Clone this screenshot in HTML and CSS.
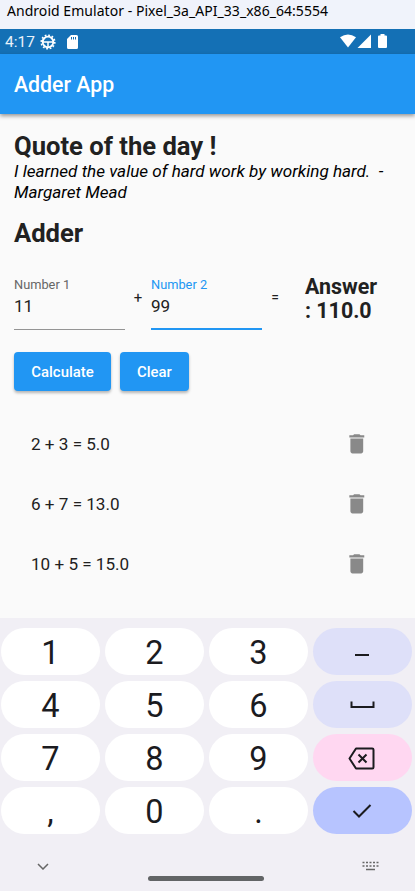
FILE: index.html
```
<!DOCTYPE html>
<html lang="en">
<head>
<meta charset="utf-8">
<title>Adder App</title>
<link rel="stylesheet" href="styles.css">
</head>
<body>
<div class="window-title"><span>Android Emulator - Pixel_3a_API_33_x86_64:5554</span></div>
<div class="status">
  <span class="time">4:17</span>
  <svg class="gear" viewBox="0 0 16 16"><circle cx="8" cy="8" r="5.3" fill="none" stroke="#fff" stroke-width="1.8"/><circle cx="8" cy="8" r="6.8" fill="none" stroke="#fff" stroke-width="1.6" stroke-dasharray="1.8 1.76"/><path d="M3 8h10M8 8v5" fill="none" stroke="#fff" stroke-width="1.500"/></svg>
  <svg class="sd" viewBox="0 0 11 14"><path fill="#fff" d="M4 0h5.500A1.500 1.500 0 0 1 11 1.500v11A1.500 1.500 0 0 1 9.500 14h-8A1.500 1.500 0 0 1 0 12.500V4z"/><path stroke="#1470b5" stroke-width="1" d="M4.500 2v2.500M6.500 2v2.500M8.500 2v2.500"/></svg>
  <svg class="signals" viewBox="0 0 48 15"><g fill="#fff"><path d="M0 3.200Q8 -2.200 16 3.200L8 13.500z"/><path d="M17.500 14L31 .500V14z"/><path d="M40.500 0h4v1.500H46a1 1 0 0 1 1 1V13a1 1 0 0 1-1 1h-7a1 1 0 0 1-1-1V2.500a1 1 0 0 1 1-1h1.500z"/></g></svg>
</div>
<header class="appbar">Adder App</header>
<main>
  <h1>Quote of the day !</h1>
  <p class="quote">I learned the value of hard work by working hard.&nbsp; -<br>Margaret Mead</p>
  <h1 class="adder">Adder</h1>
  <div class="sum">
    <div class="field"><label>Number 1</label><span>11</span></div>
    <span class="op">+</span>
    <div class="field active"><label>Number 2</label><span>99</span></div>
    <span class="op equals">=</span>
    <div class="answer">Answer<br>: 110.0</div>
  </div>
  <div class="actions"><button class="calculate">Calculate</button><button class="clear">Clear</button></div>
  <ul>
    <li><span>2 + 3 = 5.0</span><svg viewBox="0 0 24 24"><path d="M6 19c0 1.100.9 2 2 2h8c1.100 0 2-.9 2-2V7H6v12zM19 4h-3.500l-1-1h-5l-1 1H5v2h14V4z"/></svg></li>
    <li><span>6 + 7 = 13.0</span><svg viewBox="0 0 24 24"><path d="M6 19c0 1.100.9 2 2 2h8c1.100 0 2-.9 2-2V7H6v12zM19 4h-3.500l-1-1h-5l-1 1H5v2h14V4z"/></svg></li>
    <li><span>10 + 5 = 15.0</span><svg viewBox="0 0 24 24"><path d="M6 19c0 1.100.9 2 2 2h8c1.100 0 2-.9 2-2V7H6v12zM19 4h-3.500l-1-1h-5l-1 1H5v2h14V4z"/></svg></li>
  </ul>
</main>
<section class="keyboard">
  <div class="keys">
    <div class="key">1</div><div class="key">2</div><div class="key">3</div>
    <div class="key soft"><svg viewBox="0 0 32 26"><path d="M8 16h14" stroke-width="2"/></svg></div>
    <div class="key">4</div><div class="key">5</div><div class="key">6</div>
    <div class="key soft"><svg viewBox="0 0 32 26"><path d="M4.500 9.500v5.500h22V9.500" stroke-width="2"/></svg></div>
    <div class="key">7</div><div class="key">8</div><div class="key">9</div>
    <div class="key pink"><svg viewBox="0 0 32 26"><path d="M9 3.500h16.200q1.300 0 1.300 1.300v17.400q0 1.300-1.300 1.300H9L2.500 13.500zM11.500 9.500l8 8M19.500 9.500l-8 8" stroke-width="2" stroke-linejoin="round"/></svg></div>
    <div class="key">,</div><div class="key">0</div><div class="key">.</div>
    <div class="key enter"><svg viewBox="0 0 32 26"><path d="M6.500 13l5.500 5.500L23.500 7" stroke-width="2"/></svg></div>
  </div>
  <div class="nav">
    <svg class="chevron" viewBox="0 0 12 7"><path d="M1 1l5 5 5-5"/></svg>
    <div class="home"></div>
    <svg class="board" viewBox="0 0 17 10"><path d="M.5 1.500h16M.5 5h16" stroke-dasharray="2 1.500"/><path d="M4 8.500h9"/></svg>
  </div>
</section>
</body>
</html>
```
FILE: styles.css
```
* { box-sizing: border-box; }
body { margin: 0; width: 415px; height: 891px; overflow: hidden; display: flex; flex-direction: column; background: #fafafa; color: #212121; font-family: Roboto, sans-serif; }
h1, p, ul { margin: 0; padding: 0; }
svg { display: block; flex: none; }
.window-title { height: 29px; flex: none; background: #f0f3fb; color: #000; font: 14px/21px "Noto Sans", sans-serif; padding-left: 7px; white-space: nowrap; letter-spacing: .04px; }
.status { height: 25px; flex: none; background: #1470b5; color: #e8f2fa; display: flex; align-items: center; padding: 0 27px 0 5px; }
.time { width: 35px; font-size: 15.500px; line-height: 24px; padding-top: 1px; }
.gear { width: 16px; height: 16px; margin-right: 11px; }
.sd { width: 11px; height: 14px; }
.signals { width: 48px; height: 15px; margin-left: auto; }
.appbar { height: 60px; flex: none; background: #2196f3; color: #fff; font-size: 21.300px; font-weight: 500; line-height: 62px; padding-left: 14px; box-shadow: 0 2px 4px rgba(0,0,0,.4); z-index: 1; }
main { height: 504px; flex: none; padding: 17px 14px 0; }
h1 { font-size: 25.600px; font-weight: 700; line-height: 30px; }
.quote { color: #000; font-size: 17.100px; font-style: italic; line-height: 20.500px; white-space: nowrap; }
.adder { margin-top: 16px; }
.sum { display: flex; height: 82px; padding-top: 27px; }
.field { width: 111px; height: 55px; border-bottom: 1px solid #949494; display: flex; flex-direction: column; padding-top: 2px; }
.field label { font-size: 12.800px; line-height: 16px; color: #666; }
.field span { font-size: 17.100px; line-height: 20px; margin-top: 3px; }
.field.active { border-bottom: 2px solid #2196f3; }
.active label { color: #2196f3; }
.op { width: 26px; text-align: center; font-size: 15px; line-height: 18px; padding-top: 14px; }
.equals { font-size: 14px; padding-top: 13px; }
.answer { margin-left: 17px; font-size: 21.400px; font-weight: 700; line-height: 24.400px; white-space: nowrap; }
.actions { display: flex; gap: 9px; margin-top: 22px; }
button { height: 39px; border: 0; padding: 0; border-radius: 4px; background: #2196f3; color: #fff; font: 500 14.900px/41px Roboto, sans-serif; box-shadow: 0 2px 3px rgba(0,0,0,.28); }
.calculate { width: 97px; }
.clear { width: 69px; }
ul { margin-top: 23px; list-style: none; }
li { height: 60px; display: flex; align-items: center; justify-content: space-between; padding: 0 31px 0 17px; font-size: 17.100px; }
li svg { width: 25.600px; height: 25.600px; fill: #898989; }
.keyboard { height: 273px; flex: none; background: #f1eff5; padding: 10px 3px 0 1px; }
.keys { display: grid; grid-template-columns: repeat(4, 99px); grid-auto-rows: 47px; gap: 6px 5px; }
.key { border-radius: 24px; background: #fff; color: #1b1b1f; font: 32.500px/51px Roboto, sans-serif; text-align: center; }
.key svg { width: 32px; height: 26px; margin: 11px auto 0; fill: none; stroke: #1b1b1f; }
.soft { background: #dee0f9; }
.pink { background: #ffd7f1; }
.enter { background: #b7c4ff; }
.nav { display: grid; grid-template-columns: 35px 1fr 49px; margin-top: 25px; }
.nav svg { fill: none; stroke: #666; stroke-width: 1.500; }
.chevron { width: 12px; height: 7px; margin: 4px 0 0 36px; }
.home { width: 116px; height: 5px; margin: 17px 0 0 112px; border-radius: 3px; background: #626466; }
.board { width: 17px; height: 10px; margin: 2px 0 0 -1px; }
```
